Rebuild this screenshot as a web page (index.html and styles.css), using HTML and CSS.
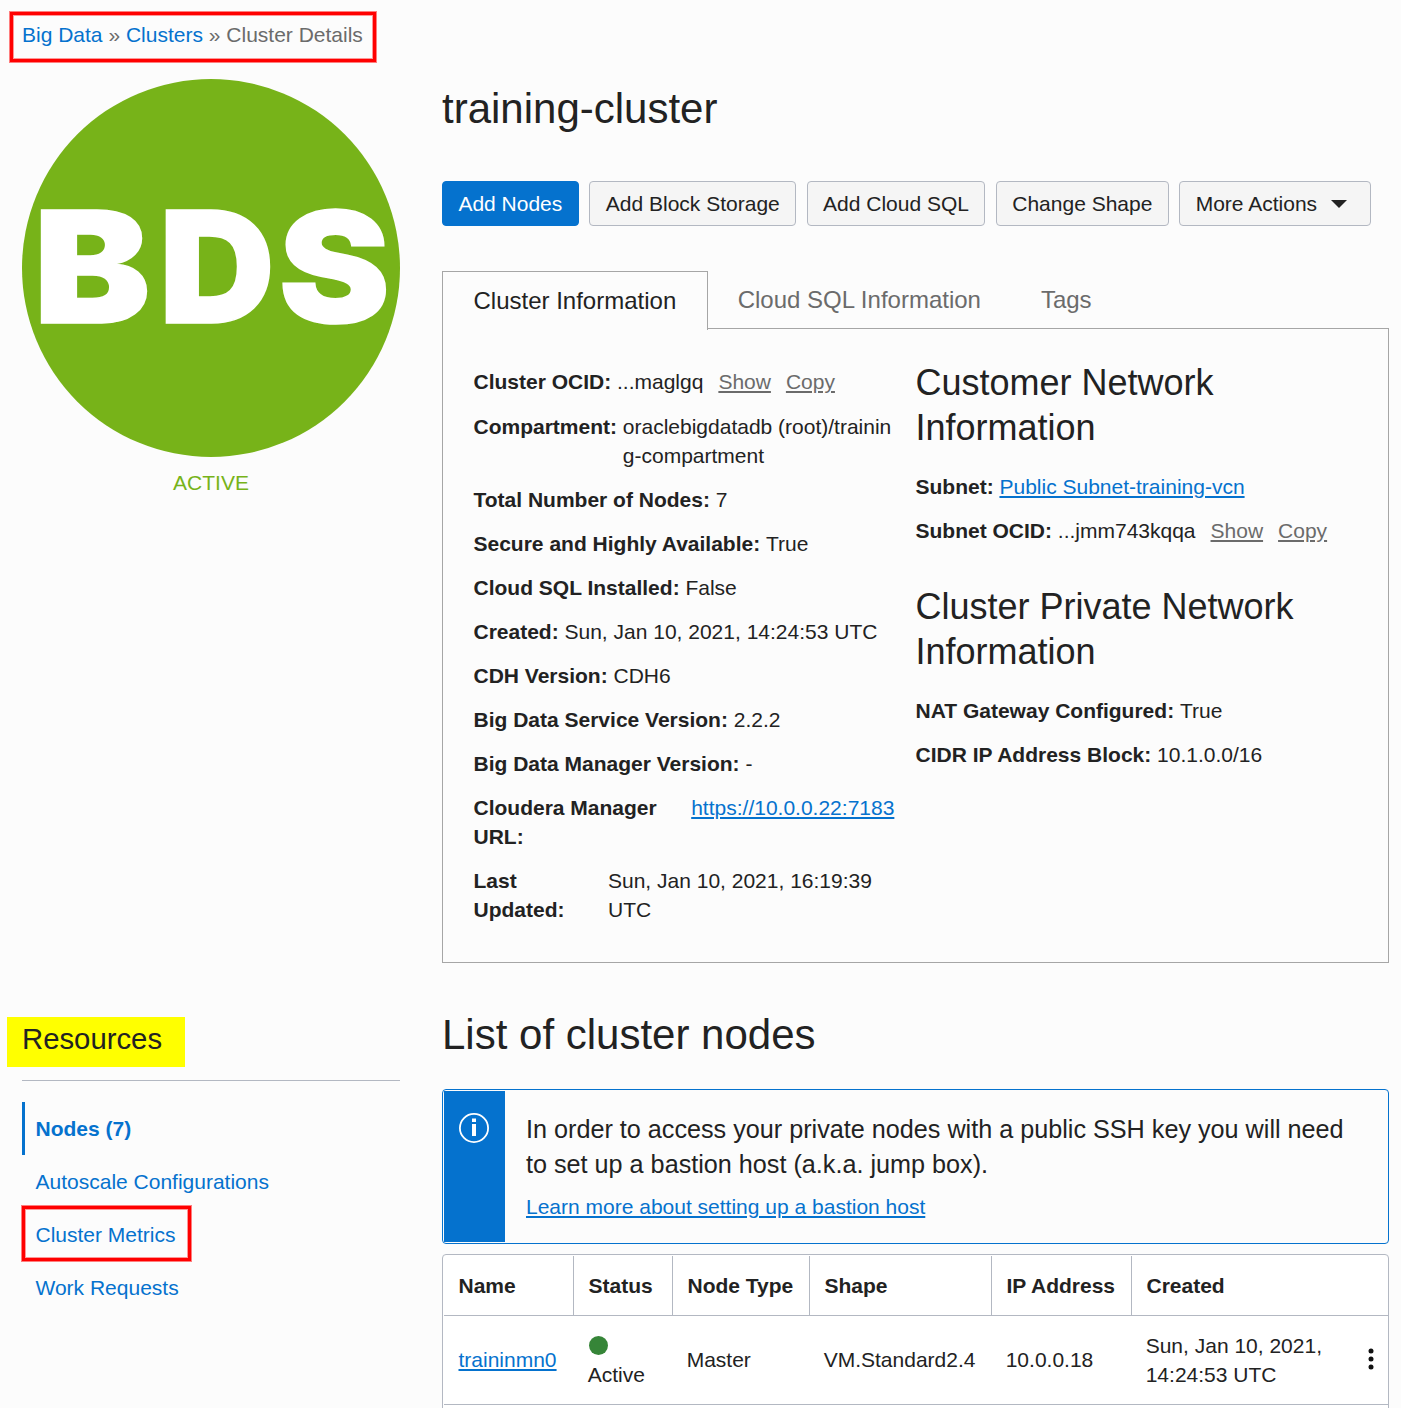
FILE: index.html
```html
<!DOCTYPE html>
<html lang="en">
<head>
<meta charset="utf-8">
<title>Cluster Details</title>
<link rel="stylesheet" href="styles.css">
</head>
<body>
<div class="page">
  <nav class="breadcrumb">
    <a href="#">Big Data</a> » <a href="#">Clusters</a> » <span>Cluster Details</span>
  </nav>
  <div class="layout">
    <aside class="badge-column">
      <svg class="badge" viewBox="0 0 378 378" role="img" aria-label="BDS">
        <circle cx="189" cy="189" r="189"/>
        <g class="badge-text">
          <text transform="translate(11.6 244.200) scale(1.13 1)">B</text>
          <text transform="translate(136.900 244.200) scale(1.035 1)">D</text>
          <text transform="translate(256.500 244.200) scale(1.08 1)">S</text>
        </g>
      </svg>
      <div class="state">ACTIVE</div>
    </aside>
    <main class="details">
      <h1>training-cluster</h1>
      <div class="actions">
        <button class="btn primary">Add Nodes</button>
        <button class="btn">Add Block Storage</button>
        <button class="btn">Add Cloud SQL</button>
        <button class="btn">Change Shape</button>
        <button class="btn more">More Actions <svg class="caret" viewBox="0 0 16 8"><path d="M0 0h16L8 8z"/></svg></button>
      </div>
      <div class="tabs">
        <div class="tab active">Cluster Information</div>
        <div class="tab">Cloud SQL Information</div>
        <div class="tab">Tags</div>
      </div>
      <section class="panel">
        <dl class="facts">
          <div class="fact tall"><dt>Cluster OCID:</dt><dd>...maglgq<a class="quiet" href="#">Show</a><a class="quiet" href="#">Copy</a></dd></div>
          <div class="fact"><dt>Compartment:</dt><dd class="break">oraclebigdatadb (root)/training-compartment</dd></div>
          <div class="fact"><dt>Total Number of Nodes:</dt><dd>7</dd></div>
          <div class="fact"><dt>Secure and Highly Available:</dt><dd>True</dd></div>
          <div class="fact"><dt>Cloud SQL Installed:</dt><dd>False</dd></div>
          <div class="fact"><dt>Created:</dt><dd>Sun, Jan 10, 2021, 14:24:53 UTC</dd></div>
          <div class="fact"><dt>CDH Version:</dt><dd>CDH6</dd></div>
          <div class="fact"><dt>Big Data Service Version:</dt><dd>2.2.2</dd></div>
          <div class="fact"><dt>Big Data Manager Version:</dt><dd>-</dd></div>
          <div class="fact manager"><dt>Cloudera Manager URL:</dt><dd><a href="#">https://10.0.0.22:7183</a></dd></div>
          <div class="fact updated"><dt>Last Updated:</dt><dd>Sun, Jan 10, 2021, 16:19:39 UTC</dd></div>
        </dl>
        <div class="network">
          <h3>Customer Network Information</h3>
          <dl>
            <div class="fact"><dt>Subnet:</dt><dd><a href="#">Public Subnet-training-vcn</a></dd></div>
            <div class="fact"><dt>Subnet OCID:</dt><dd>...jmm743kqqa<a class="quiet" href="#">Show</a><a class="quiet" href="#">Copy</a></dd></div>
          </dl>
          <h3>Cluster Private Network Information</h3>
          <dl>
            <div class="fact"><dt>NAT Gateway Configured:</dt><dd>True</dd></div>
            <div class="fact"><dt>CIDR IP Address Block:</dt><dd>10.1.0.0/16</dd></div>
          </dl>
        </div>
      </section>
    </main>
    <aside class="resources">
      <h2><span>Resources</span></h2>
      <ul>
        <li class="current"><a href="#">Nodes (7)</a></li>
        <li><a href="#">Autoscale Configurations</a></li>
        <li><a href="#">Cluster Metrics</a></li>
        <li><a href="#">Work Requests</a></li>
      </ul>
    </aside>
    <section class="nodes">
      <h1>List of cluster nodes</h1>
      <div class="notice">
        <div class="notice-icon">
          <svg viewBox="0 0 30 30"><circle cx="15" cy="15" r="14.1"/><path d="M13 5.600h4v3.400h-4zM13 11h4v12h-4z"/></svg>
        </div>
        <div class="notice-body">
          <p>In order to access your private nodes with a public SSH key you will need to set up a bastion host (a.k.a. jump box).</p>
          <a href="#">Learn more about setting up a bastion host</a>
        </div>
      </div>
      <div class="table-frame">
        <table>
          <colgroup><col class="c-name"><col class="c-status"><col class="c-type"><col class="c-shape"><col class="c-ip"><col class="c-created"><col></colgroup>
          <thead>
            <tr><th>Name</th><th>Status</th><th>Node Type</th><th>Shape</th><th>IP Address</th><th>Created</th><th></th></tr>
          </thead>
          <tbody>
            <tr>
              <td><a href="#">traininmn0</a></td>
              <td><span class="dot"></span>Active</td>
              <td>Master</td>
              <td>VM.Standard2.4</td>
              <td>10.0.0.18</td>
              <td>Sun, Jan 10, 2021, 14:24:53 UTC</td>
              <td class="menu"><svg viewBox="0 0 6 22"><circle cx="3" cy="3" r="2.500"/><circle cx="3" cy="11" r="2.500"/><circle cx="3" cy="19" r="2.500"/></svg></td>
            </tr>
          </tbody>
        </table>
      </div>
    </section>
  </div>
  <div class="callout callout-path"></div>
  <div class="callout callout-metrics"></div>
</div>
</body>
</html>
```
FILE: styles.css
```css
* { box-sizing: border-box; }

body {
  margin: 0;
  background: #fcfcfc;
  color: #222;
  font: 21px/29px "Liberation Sans", Arial, sans-serif;
}

a { color: #0572ce; text-decoration-thickness: 2px; text-underline-offset: 2px; }
h1, h2, h3, p, ul, dl, dd { margin: 0; padding: 0; font-weight: normal; }
h1 { font-size: 42px; line-height: 50px; }

.page { position: relative; width: 1401px; height: 1408px; overflow: hidden; padding: 20px 12px 0 22px; }

.breadcrumb { height: 59px; color: #6b6b6b; }
.breadcrumb a { text-decoration: none; }

.layout {
  display: grid;
  grid-template-columns: 378px 947px;
  grid-template-rows: 930px auto;
  column-gap: 42px;
}

.badge { display: block; width: 378px; height: 378px; }
.badge circle { fill: #77b319; }
.badge-text { fill: #fff; stroke: #fff; stroke-width: 1.5px; font: 900 155px Inter, sans-serif; }
.state { margin-top: 11px; text-align: center; color: #77b319; }

.details { padding-top: 5px; }
.actions { display: flex; gap: 10.300px; margin: 47px 0 45px; }
.btn {
  height: 45px;
  padding: 0 15.500px;
  border: 1px solid #b3b8c2;
  border-radius: 4px;
  background: #f5f5f5;
  color: #222;
  font: inherit;
  white-space: nowrap;
}
.btn.primary { padding: 0 15.500px 0 15.200px; width: 137px; background: #0572ce; border-color: #0572ce; color: #fff; }
.btn.more { display: flex; align-items: center; gap: 14px; width: 192px; }
.caret { width: 16px; height: 8px; fill: #222; }

.tabs { display: flex; height: 57px; font-size: 24px; color: #6b6b6b; }
.tab { padding: 0 30.300px 0 29.700px; line-height: 58px; white-space: nowrap; }
.tab.active {
  position: relative;
  width: 266px;
  height: 59px;
  padding: 0 0 0 30.500px;
  border: 1px solid #a6a6a6;
  border-bottom: 0;
  background: #fcfcfc;
  color: #222;
}

.panel {
  display: grid;
  grid-template-columns: 422px 442px;
  column-gap: 20px;
  height: 635px;
  padding: 31px 30px 0 30.500px;
  border: 1px solid #a6a6a6;
}
.facts { padding-top: 7px; }
.fact { display: flex; gap: 5.800px; margin-bottom: 15px; }
.fact.tall { margin-bottom: 16px; }
.fact dt { font-weight: bold; white-space: nowrap; }
.break { word-break: break-all; }
.fact.manager, .fact.updated { gap: 0; }
.fact.manager dt, .fact.updated dt { flex: none; white-space: normal; }
.manager dt { width: 217.700px; padding-right: 10px; }
.updated dt { width: 134.500px; padding-right: 30px; }
.quiet { margin-left: 15px; color: #6b6b6b; }

h3 { width: 400px; margin-bottom: 22px; font-size: 36px; line-height: 45px; }
dl + h3 { margin-top: 39px; }

.resources { padding-top: 8px; }
.resources h2 {
  height: 64px;
  border-bottom: 1px solid #b3b8c2;
  font-size: 29.300px;
  line-height: 44px;
}
.resources h2 span { display: block; width: 178px; height: 50px; margin-left: -15px; padding-left: 15px; background: #ff0; }
.resources ul { margin-top: 21px; list-style: none; }
.resources li { height: 53px; padding-left: 10.500px; border-left: 3px solid transparent; line-height: 53px; }
.resources li a { text-decoration: none; }
.resources .current { border-color: #0572ce; font-weight: bold; }

.nodes h1 { padding-top: 1px; margin-bottom: 29px; }
.notice {
  display: flex;
  height: 155px;
  padding: 1px;
  border: 1px solid #0572ce;
  border-radius: 4px;
}
.notice-icon { width: 61px; padding: 22px 0 0 15px; background: #0572ce; }
.notice-icon svg { display: block; width: 30px; height: 30px; fill: #fff; }
.notice-icon circle { fill: none; stroke: #fff; stroke-width: 1.800; }
.notice-body { flex: 1; padding: 21px 20px 0 21px; }
.notice-body p { margin-bottom: 10px; font-size: 25.200px; line-height: 35px; }

.table-frame {
  height: 175px;
  margin-top: 10px;
  padding: 1px 0 0 1px;
  border: 1px solid #b3b8c2;
  border-radius: 4px;
  background: #fff;
}
table { width: 944px; table-layout: fixed; border-collapse: separate; border-spacing: 0; }
.c-name { width: 130px; }
.c-status { width: 99px; }
.c-type { width: 137px; }
.c-shape { width: 182px; }
.c-ip { width: 140px; }
.c-created { width: 208px; }
th, td { padding: 0 0 0 14.500px; border-bottom: 1px solid #b3b8c2; text-align: left; }
th { height: 60px; border-right: 1px solid #b3b8c2; }
th:nth-child(n+6) { border-right: 0; }
td { height: 89px; padding: 0 0 1px 13.700px; }
td:first-child { padding-left: 14.500px; }
.dot { display: block; width: 19px; height: 19px; margin: 5px 0 5px 1px; border-radius: 50%; background: #368538; }
td.menu { padding: 0 0 2px 28px; }
.menu svg { display: block; width: 6px; height: 22px; fill: #111; }

.callout {
  position: absolute;
  border: 3px solid #f00;
  box-shadow: 0 0 0 1px rgba(255, 0, 0, 0.5), inset 0 0 0 1px rgba(255, 0, 0, 0.4);
}
.callout-path { left: 10px; top: 12px; width: 366px; height: 50px; }
.callout-metrics { left: 22px; top: 1206px; width: 169px; height: 55px; }
```
